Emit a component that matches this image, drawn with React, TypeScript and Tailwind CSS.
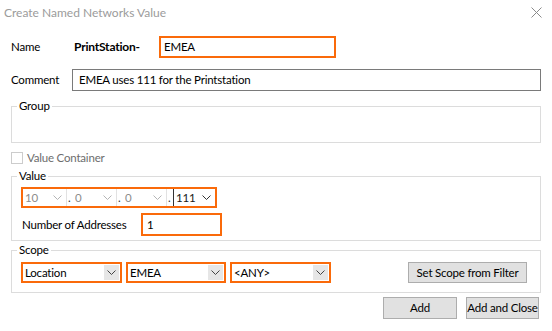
import React from 'react'

function Chevron({ className }: { className?: string }) {
  return (
    <svg width="9" height="5" viewBox="0 0 9 5" className={className}>
      <path d="M0.5 0.5 L4.5 4.5 L8.5 0.5" fill="none" stroke="currentColor" strokeWidth="1" />
    </svg>
  )
}

function IpPart({ value, active }: { value: string; active?: boolean }) {
  return (
    <div
      className={`flex h-full items-center justify-between pl-[2px] pr-[4px] ${
        active ? 'w-[42px] border-l border-[#333] text-[#1a1a1a]' : 'w-[43px] text-[#8c8c8c]'
      }`}
    >
      <span>{value}</span>
      <Chevron className={active ? 'text-[#333]' : 'text-[#b4b4b4]'} />
    </div>
  )
}

function Dot() {
  return <div className="flex h-full w-[7px] items-center border-l border-[#e2e2e2] pl-[1px] text-[#333]">.</div>
}

function Combo({ value, width }: { value: string; width: string }) {
  return (
    <div className={`flex h-[21px] items-center justify-between border-2 border-[#fa6a0a] bg-white pl-[2px] ${width}`}>
      <span>{value}</span>
      <div className="mr-[1px] flex h-[15px] w-[15px] items-center justify-center bg-[#e6e6e6]">
        <Chevron className="text-[#444]" />
      </div>
    </div>
  )
}

export default function App() {
  return (
    <div className="h-[331px] w-[552px] overflow-hidden whitespace-nowrap bg-white font-['Lato',sans-serif] text-[11.5px] leading-[16px] tracking-[-0.2px] text-black">
      {/* title bar */}
      <div className="flex h-[25px] items-center justify-between pl-[4px] pr-[10px]">
        <span className="text-[12px] tracking-normal text-[#9b9b9b]">Create Named Networks Value</span>
        <svg width="11" height="11" viewBox="0 0 11 11">
          <path d="M0.5 0.5 L10.5 10.5 M10.5 0.5 L0.5 10.5" stroke="#8a8a8a" strokeWidth="1" />
        </svg>
      </div>

      <div className="flex flex-col px-[11px]">
        {/* name */}
        <div className="mt-[11px] flex h-[22px] items-center">
          <span className="w-[63px]">Name</span>
          <span className="w-[85px] text-[12px] font-bold tracking-[-0.2px]">PrintStation-</span>
          <div className="flex h-[22px] w-[177px] items-center border-2 border-[#fa6a0a] pl-[3px]">EMEA</div>
        </div>

        {/* comment */}
        <div className="mt-[11px] flex h-[22px] items-center">
          <span className="w-[61px]">Comment</span>
          <div className="flex h-[22px] flex-1 items-center border border-[#7a7a7a] pl-[6px]">
            EMEA uses 111 for the Printstation
          </div>
        </div>

        {/* group */}
        <fieldset className="mt-[7px] h-[45px] border border-[#dcdcdc]">
          <legend className="ml-[5px] px-[2px] leading-[16px]">Group</legend>
        </fieldset>

        {/* value container */}
        <div className="mt-[9px] flex h-[12px] items-center gap-[4px]">
          <div className="h-[12px] w-[12px] border border-[#cccccc] bg-white" />
          <span className="text-[#6d6d6d]">Value Container</span>
        </div>

        {/* value */}
        <fieldset className="mt-[4px] h-[73px] border border-[#dcdcdc]">
          <legend className="ml-[5px] px-[2px] leading-[16px]">Value</legend>
          <div className="ml-[9px] mt-[3px] flex flex-col gap-[5px]">
            <div className="flex h-[21px] w-[196px] items-center border-2 border-[#fa6a0a]">
              <IpPart value="10" />
              <Dot />
              <IpPart value="0" />
              <Dot />
              <IpPart value="0" />
              <Dot />
              <IpPart value="111" active />
            </div>
            <div className="flex h-[23px] items-center">
              <span className="w-[120px] pl-[1px]">Number of Addresses</span>
              <div className="flex h-[23px] w-[81px] items-center border-2 border-[#fa6a0a] pl-[4px]">1</div>
            </div>
          </div>
        </fieldset>

        {/* scope */}
        <fieldset className="mt-[1px] h-[51px] border border-[#dcdcdc]">
          <legend className="ml-[5px] px-[2px] leading-[16px]">Scope</legend>
          <div className="ml-[9px] mr-[13px] mt-[4px] flex items-center">
            <div className="flex gap-[4px]">
              <Combo value="Location" width="w-[101px]" />
              <Combo value="EMEA" width="w-[100px]" />
              <Combo value="<ANY>" width="w-[101px]" />
            </div>
            <button className="ml-auto h-[21px] w-[119px] border border-[#adadad] bg-[#e1e1e1]">
              Set Scope from Filter
            </button>
          </div>
        </fieldset>

        {/* buttons */}
        <div className="mr-[2px] mt-[4px] flex justify-end gap-[9px]">
          <button className="h-[22px] w-[74px] border border-[#adadad] bg-[#e1e1e1]">Add</button>
          <button className="h-[22px] w-[73px] border border-[#adadad] bg-[#e1e1e1]">Add and Close</button>
        </div>
      </div>
    </div>
  )
}
